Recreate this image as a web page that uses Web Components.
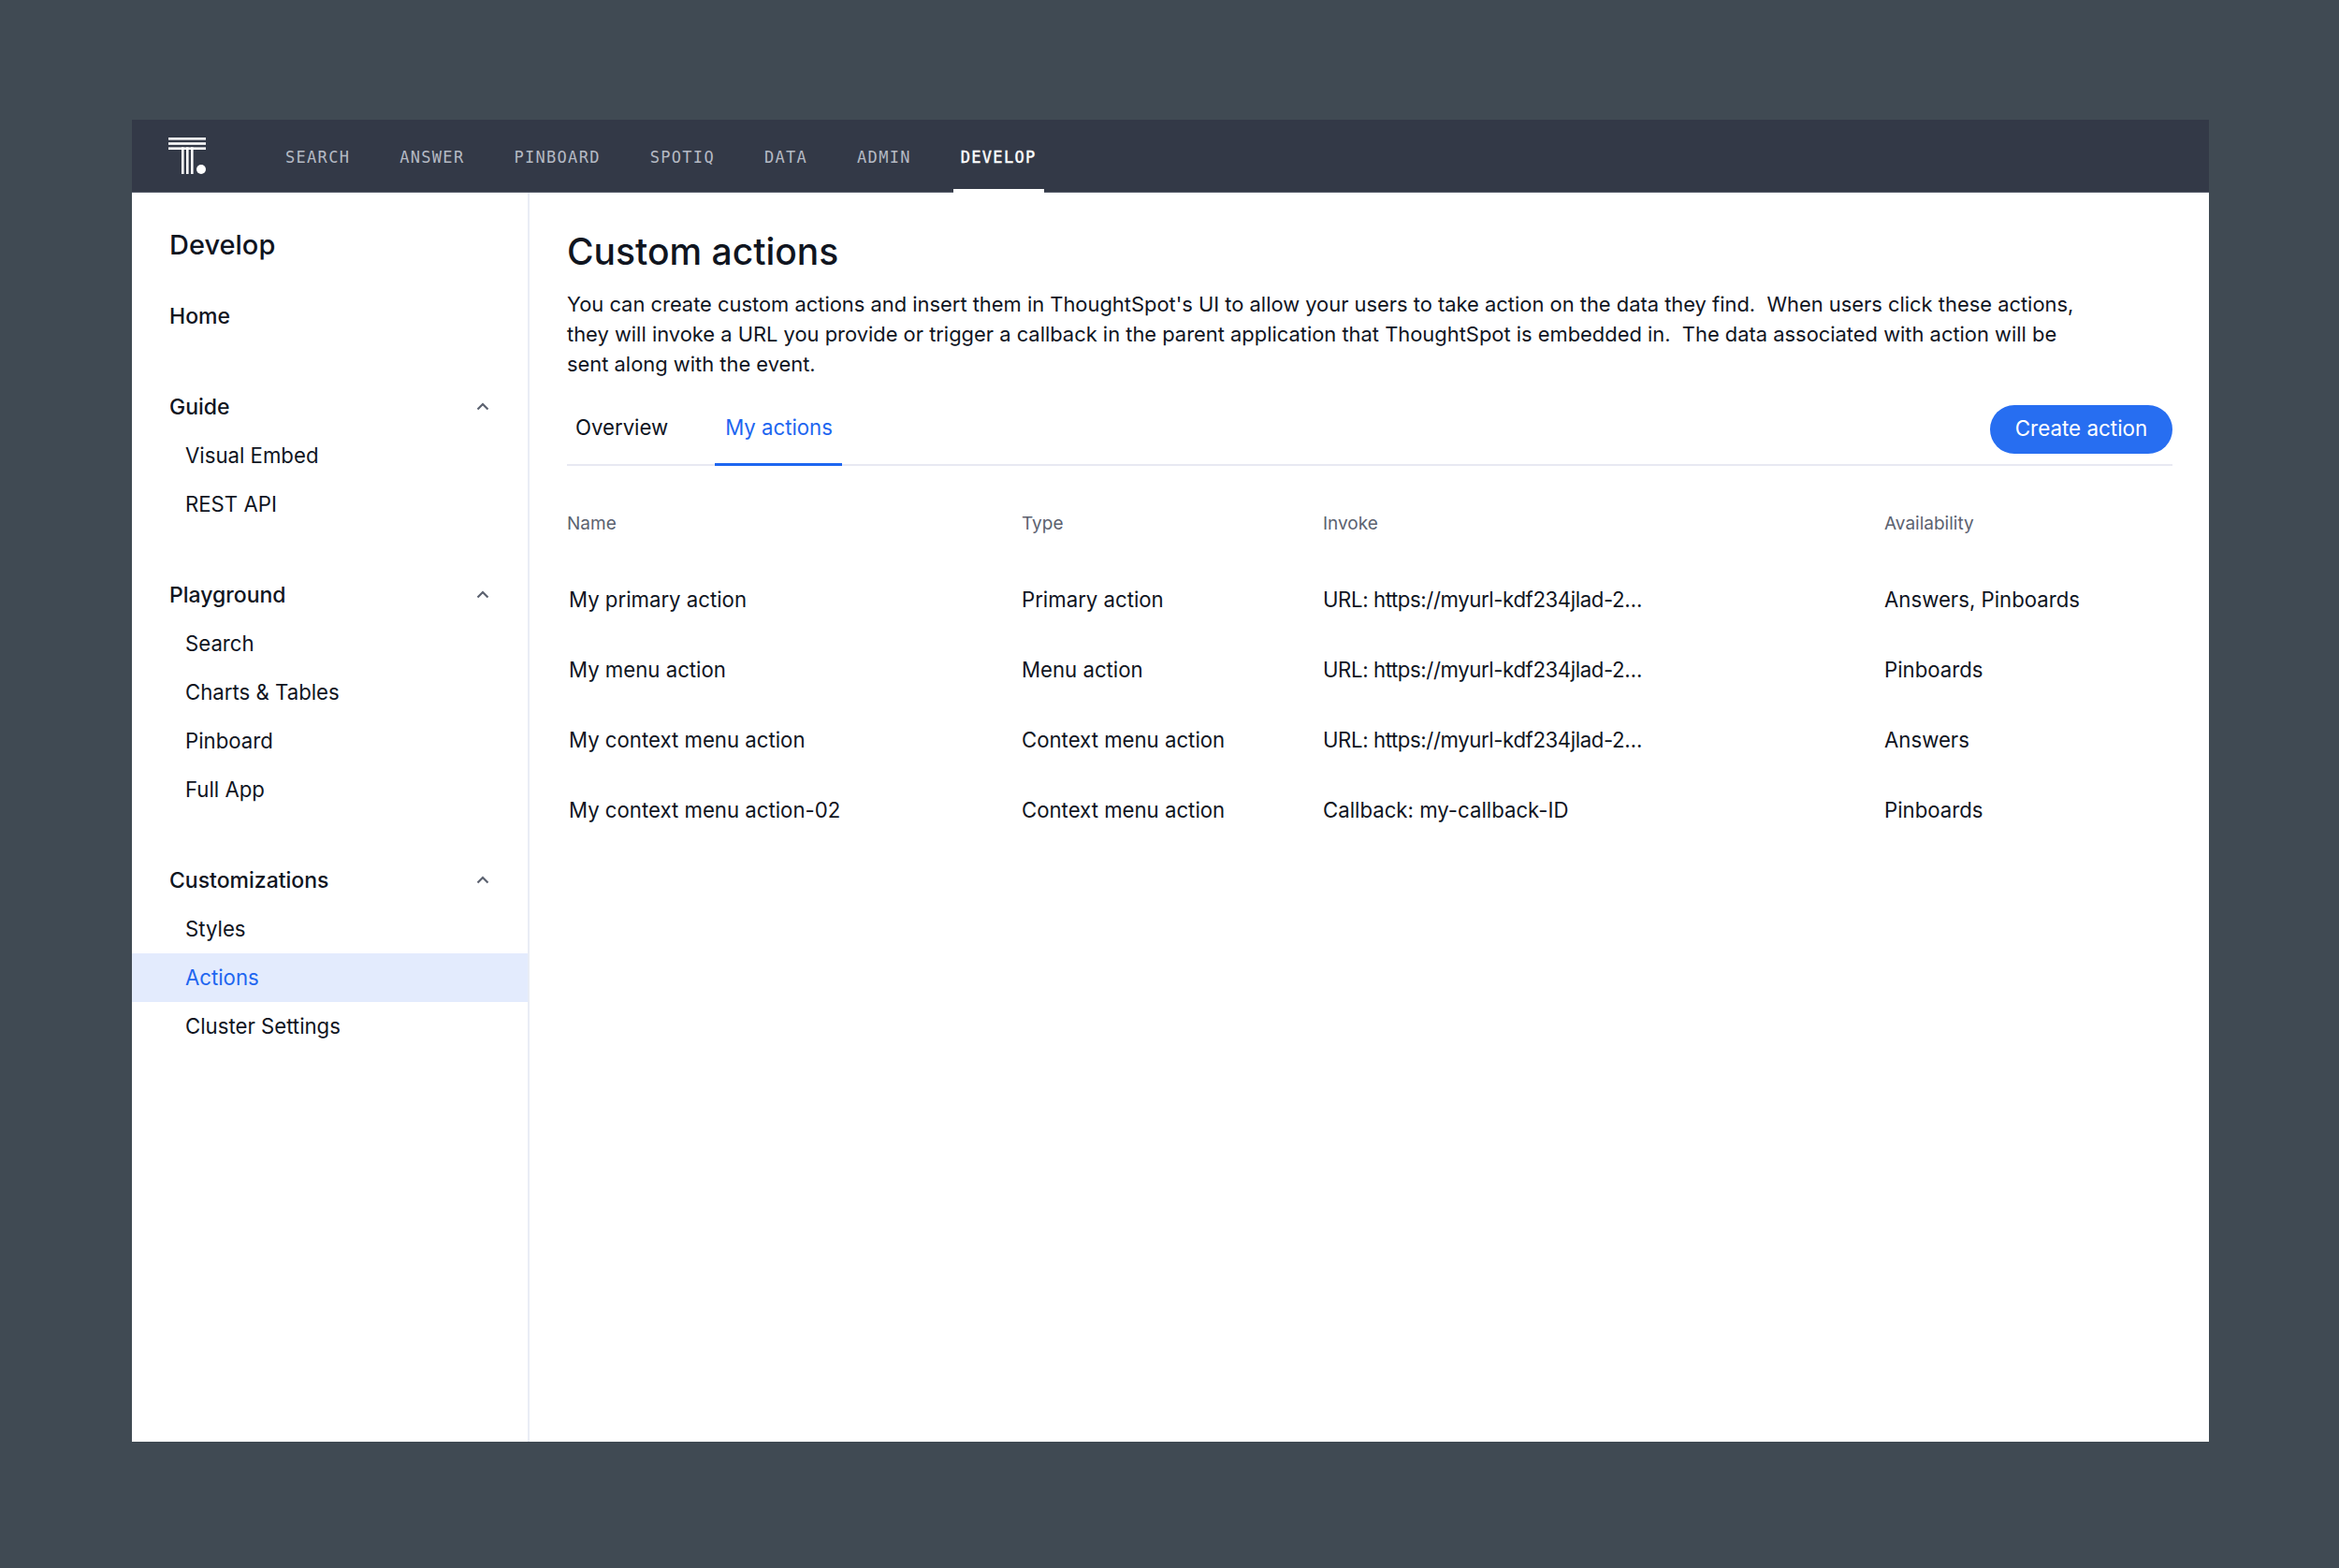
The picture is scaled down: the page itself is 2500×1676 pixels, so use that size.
<!DOCTYPE html>
<html>
<head>
<meta charset="utf-8">
<title>Custom actions</title>
<style>
  html, body { margin: 0; height: 1676px; overflow: hidden; }
  body {
    background: #404a53;
    font-family: Inter, "Liberation Sans", sans-serif;
    color: #10151f;
    padding: 128px 139px 135px 141px;
    box-sizing: border-box;
    display: flex;
  }
</style>
</head>
<body>
<dev-app>
  <top-nav slot="top">
    <nav-link>SEARCH</nav-link>
    <nav-link>ANSWER</nav-link>
    <nav-link>PINBOARD</nav-link>
    <nav-link>SPOTIQ</nav-link>
    <nav-link>DATA</nav-link>
    <nav-link>ADMIN</nav-link>
    <nav-link active>DEVELOP</nav-link>
  </top-nav>
  <side-bar slot="side">
    <side-group plain label="Home"></side-group>
    <side-group label="Guide">
      <side-item>Visual Embed</side-item>
      <side-item>REST API</side-item>
    </side-group>
    <side-group label="Playground">
      <side-item>Search</side-item>
      <side-item>Charts &amp; Tables</side-item>
      <side-item>Pinboard</side-item>
      <side-item>Full App</side-item>
    </side-group>
    <side-group label="Customizations">
      <side-item>Styles</side-item>
      <side-item active>Actions</side-item>
      <side-item>Cluster Settings</side-item>
    </side-group>
  </side-bar>
  <actions-page slot="main"></actions-page>
</dev-app>

<script>
class DevApp extends HTMLElement {
  connectedCallback() {
    this.attachShadow({ mode: 'open' });
    this.shadowRoot.innerHTML = `
      <style>
        :host { display: flex; flex-direction: column; width: 2220px; height: 1413px; background: #fff; }
        .body { display: flex; flex: 1; min-height: 0; }
      </style>
      <slot name="top"></slot>
      <div class="body">
        <slot name="side"></slot>
        <slot name="main"></slot>
      </div>
    `;
  }
}

class TopNav extends HTMLElement {
  connectedCallback() {
    this.attachShadow({ mode: 'open' });
    this.shadowRoot.innerHTML = `
      <style>
        :host {
          display: flex; height: 78px; background: #333947; flex: none;
          box-shadow: inset 0 -1px 0 #5c6270; padding-left: 39px;
        }
        svg { display: block; margin-top: 19px; flex: none; }
        .links { display: flex; margin-left: 76px; }
      </style>
      <svg width="41" height="40" viewBox="0 0 41 40" fill="#fff">
        <rect x="0" y="0" width="40" height="2.6"/>
        <rect x="0" y="5.2" width="40" height="2.6"/>
        <rect x="0" y="10.4" width="40" height="2.6"/>
        <rect x="14" y="10.4" width="2.6" height="28.6"/>
        <rect x="19" y="10.4" width="2.6" height="28.6"/>
        <rect x="24" y="10.4" width="2.6" height="28.6"/>
        <circle cx="35" cy="34" r="5"/>
      </svg>
      <div class="links"><slot></slot></div>
    `;
  }
}

class NavLink extends HTMLElement {
  connectedCallback() {
    this.attachShadow({ mode: 'open' });
    this.shadowRoot.innerHTML = `
      <style>
        :host {
          display: flex; align-items: center; height: 78px; box-sizing: border-box;
          padding: 6px 8px 0; margin-right: 37px;
          font: 400 17px/20px "DejaVu Sans Mono", "Liberation Mono", monospace;
          letter-spacing: 1.3px; color: #b5bac4;
          border-bottom: 4px solid transparent;
        }
        :host([active]) { color: #fff; -webkit-text-stroke: .4px #fff; border-bottom-color: #fff; }
      </style>
      <slot></slot>
    `;
  }
}

class SideBar extends HTMLElement {
  connectedCallback() {
    this.attachShadow({ mode: 'open' });
    this.shadowRoot.innerHTML = `
      <style>
        :host {
          display: flex; flex-direction: column; flex: none; width: 425px; box-sizing: border-box;
          border-right: 2px solid #e9edf5; padding-top: 38px;
        }
        h2 { margin: 0 0 32px 40px; font: 500 29px/36px Inter, "Liberation Sans", sans-serif; color: #10151f; }
      </style>
      <h2>Develop</h2>
      <slot></slot>
    `;
  }
}

class SideGroup extends HTMLElement {
  connectedCallback() {
    this.attachShadow({ mode: 'open' });
    const plain = this.hasAttribute('plain');
    this.shadowRoot.innerHTML = `
      <style>
        :host { display: block; margin-bottom: 45px; }
        .head {
          display: flex; align-items: center; justify-content: space-between;
          height: 52px; padding: 0 41px 0 40px; font: 500 23px/28px Inter, "Liberation Sans", sans-serif; color: #10151f;
        }
        svg { display: block; margin-top: -2px; }
      </style>
      <div class="head">
        <span>${this.getAttribute('label')}</span>
        ${plain ? '' : `<svg width="14" height="9" viewBox="0 0 14 9" fill="none" stroke="#5c6270" stroke-width="2.2"><path d="M1.5 7.5 7 2 12.5 7.5"/></svg>`}
      </div>
      <slot></slot>
    `;
  }
}

class SideItem extends HTMLElement {
  connectedCallback() {
    this.attachShadow({ mode: 'open' });
    this.shadowRoot.innerHTML = `
      <style>
        :host {
          display: flex; align-items: center; height: 52px; padding-left: 57px;
          font: 400 22.2px/28px Inter, "Liberation Sans", sans-serif; color: #10151f;
        }
        :host([active]) { background: #e3ebfd; color: #1e66f0; }
      </style>
      <slot></slot>
    `;
  }
}

const ROWS = [
  ['My primary action', 'Primary action', 'URL: https://myurl-kdf234jlad-2…', 'Answers, Pinboards'],
  ['My menu action', 'Menu action', 'URL: https://myurl-kdf234jlad-2…', 'Pinboards'],
  ['My context menu action', 'Context menu action', 'URL: https://myurl-kdf234jlad-2…', 'Answers'],
  ['My context menu action-02', 'Context menu action', 'Callback: my-callback-ID', 'Pinboards']
];

class ActionsPage extends HTMLElement {
  connectedCallback() {
    this.attachShadow({ mode: 'open' });
    this.shadowRoot.innerHTML = `
      <style>
        :host { display: block; flex: 1; min-width: 0; padding: 38px 39px 0 40px; font-family: Inter, "Liberation Sans", sans-serif; }
        h1 { margin: 0 0 15px; font: 500 39px/50px Inter, "Liberation Sans", sans-serif; color: #10151f; }
        p { margin: 0 0 28px; width: 1620px; font-size: 21.9px; line-height: 32px; color: #10151f; }
        .tabs { display: flex; align-items: flex-start; height: 65px; box-sizing: border-box; border-bottom: 2px solid #e8e9f2; }
        .tab { height: 65px; box-sizing: border-box; padding: 8px 10px 0 9px; font-size: 22.2px; line-height: 32px; color: #10151f; margin-right: 40px; flex: none; }
        .tab.on { color: #1e66f0; border-bottom: 3px solid #1e66f0; padding-left: 11px; }
        button {
          margin-left: auto; width: 195px; height: 52px; border: 0; border-radius: 26px; padding: 0 0 2px;
          background: #276ef1; color: #fff; font: 400 22.4px/28px Inter, "Liberation Sans", sans-serif;
        }
        .grid { display: grid; grid-template-columns: 486px 322px 600px 1fr; }
        .th { height: 105px; padding-top: 50px; box-sizing: border-box; font-size: 19px; line-height: 24px; color: #5c6270; }
        .td { height: 75px; display: flex; align-items: center; font-size: 22.2px; color: #10151f; }
        .first { padding-left: 2px; }
        .url { letter-spacing: -.4px; }
      </style>
      <h1>Custom actions</h1>
      <p>You can create custom actions and insert them in ThoughtSpot's UI to allow your users to take action on the data they find.&nbsp; When users click these actions, they will invoke a URL you provide or trigger a callback in the parent application that ThoughtSpot is embedded in.&nbsp; The data associated with action will be sent along with the event.</p>
      <div class="tabs">
        <div class="tab">Overview</div>
        <div class="tab on">My actions</div>
        <button>Create action</button>
      </div>
      <div class="grid">
        <div class="th">Name</div><div class="th">Type</div><div class="th">Invoke</div><div class="th">Availability</div>
        ${ROWS.map(r => r.map((c, i) => `<div class="td ${i ? '' : 'first'} ${c.startsWith('URL') ? 'url' : ''}">${c}</div>`).join('')).join('')}
      </div>
    `;
  }
}

customElements.define('dev-app', DevApp);
customElements.define('top-nav', TopNav);
customElements.define('nav-link', NavLink);
customElements.define('side-bar', SideBar);
customElements.define('side-group', SideGroup);
customElements.define('side-item', SideItem);
customElements.define('actions-page', ActionsPage);
</script>
</body>
</html>
